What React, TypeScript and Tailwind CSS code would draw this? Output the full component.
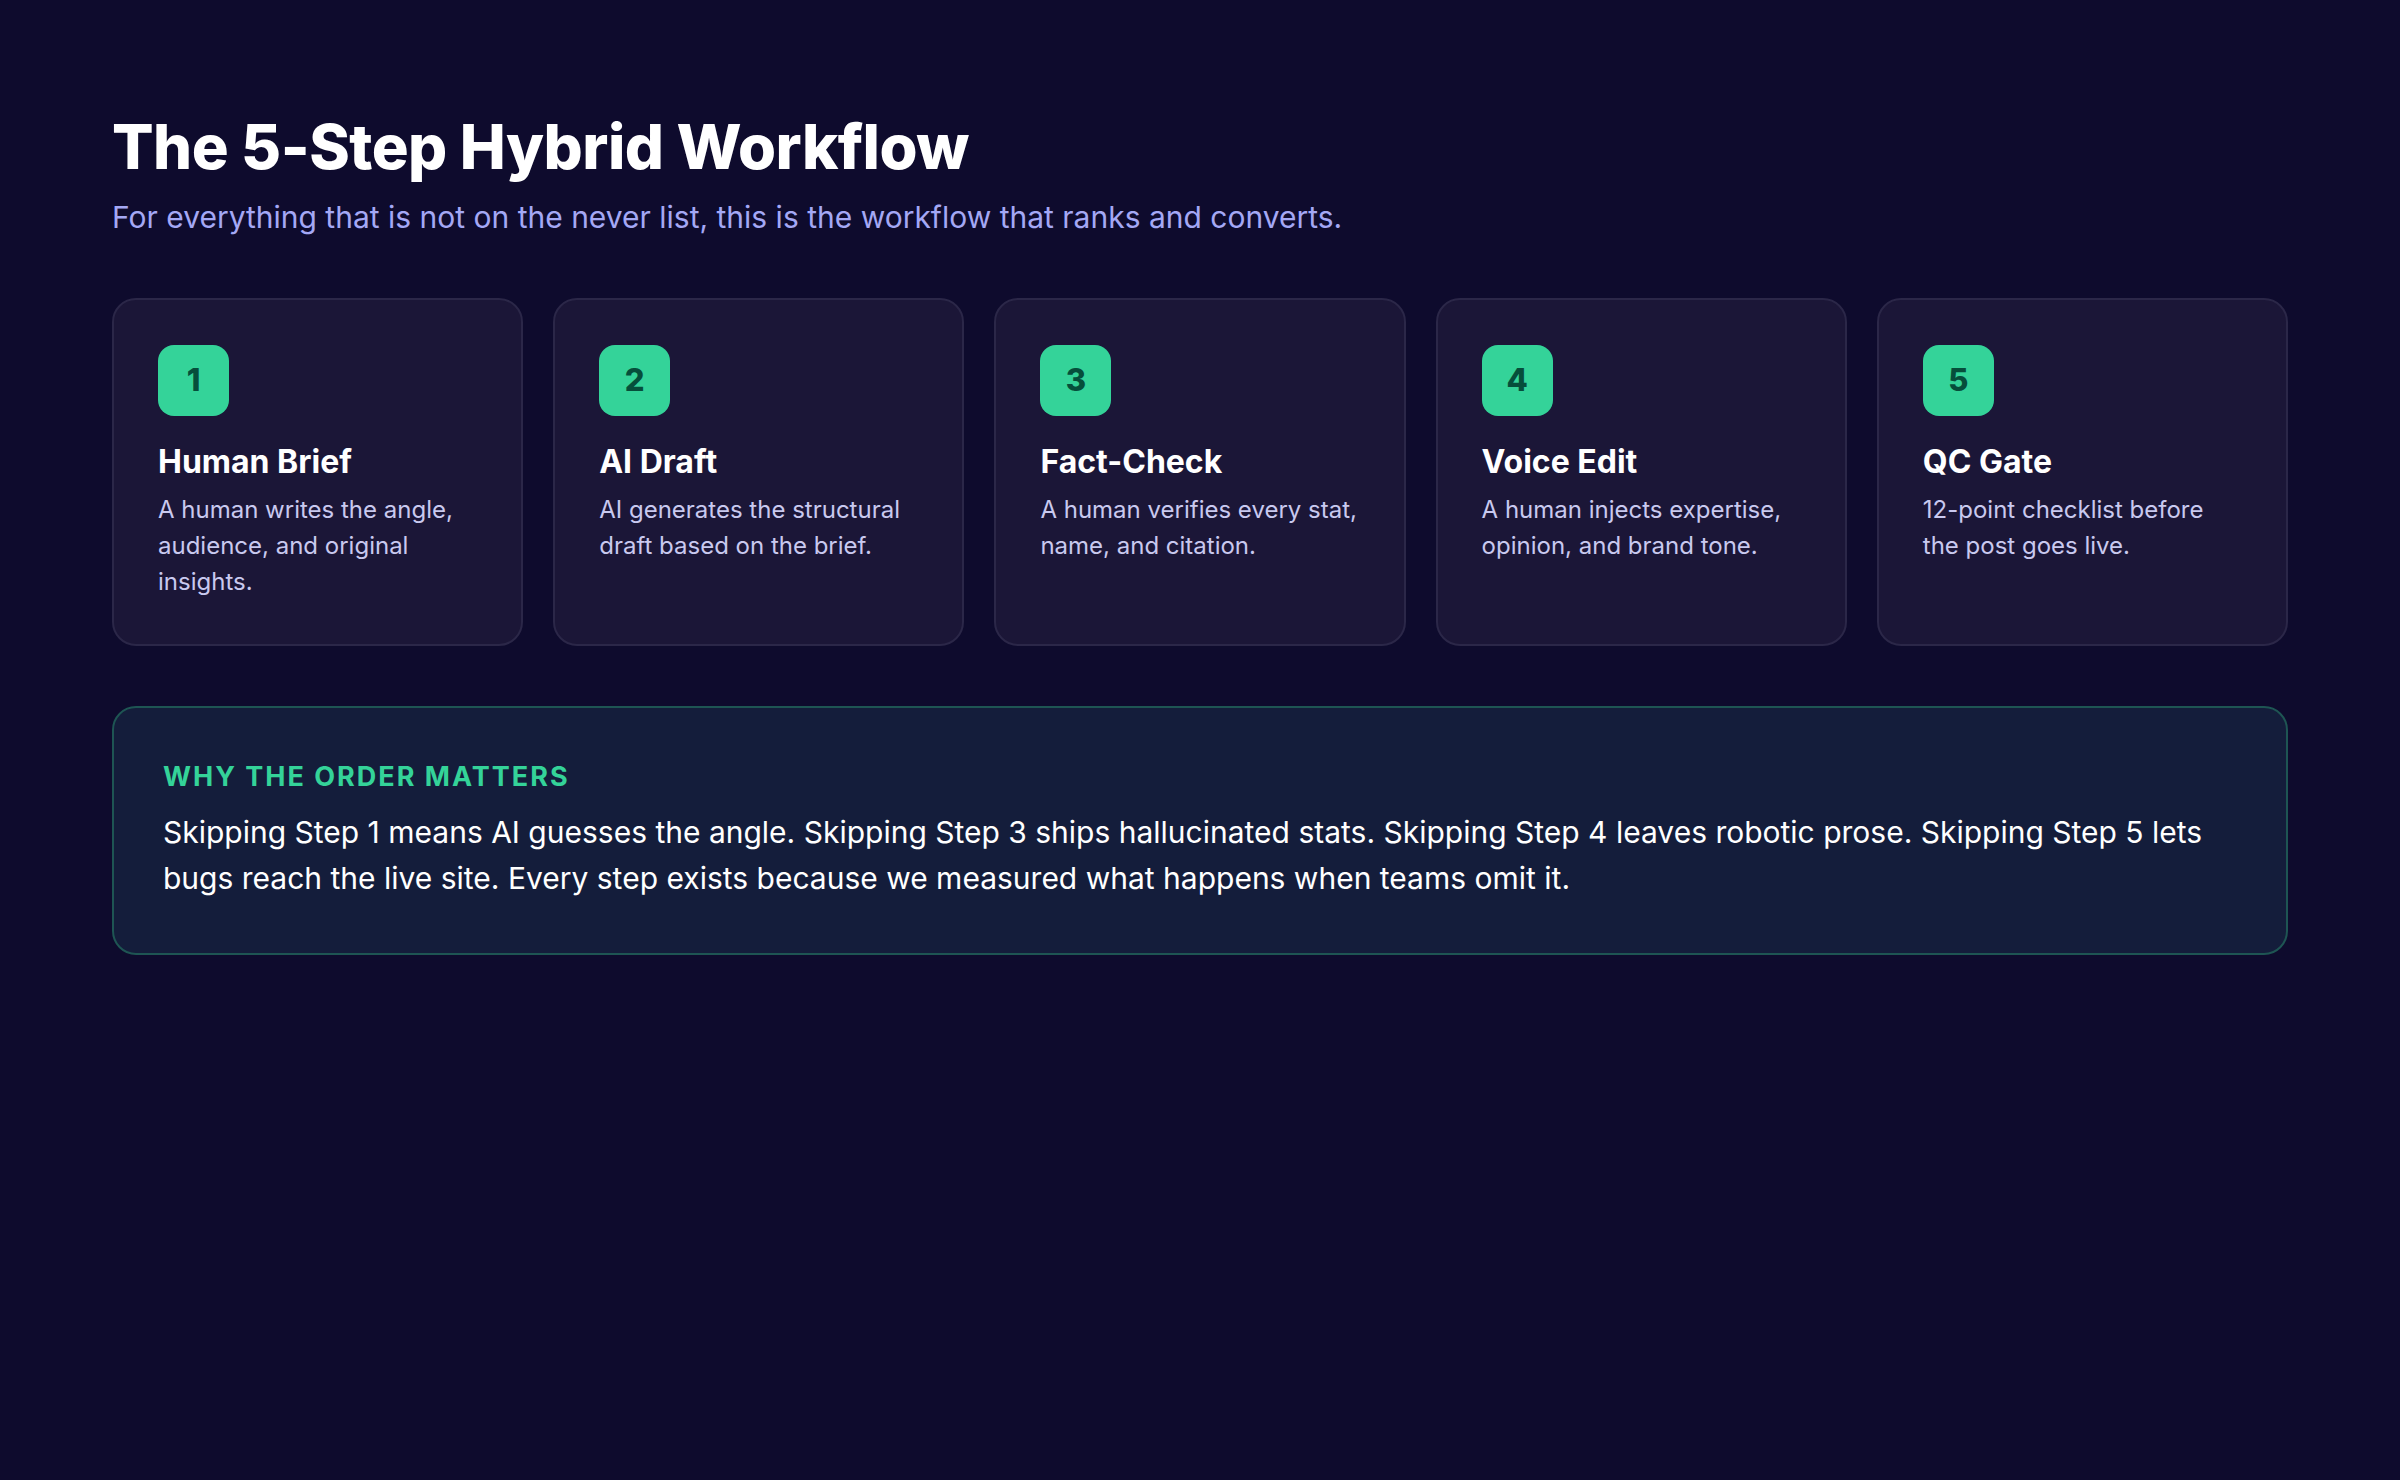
export default function App() {
  const steps = [
    ["1", "Human Brief", "A human writes the angle, audience, and original insights."],
    ["2", "AI Draft", "AI generates the structural draft based on the brief."],
    ["3", "Fact-Check", "A human verifies every stat, name, and citation."],
    ["4", "Voice Edit", "A human injects expertise, opinion, and brand tone."],
    ["5", "QC Gate", "12-point checklist before the post goes live."],
  ];
  return (
    <div className="min-h-[1480px] w-full bg-[#0e0b2d] px-[112px] pt-[110px]" style={{ fontFamily: "Inter, 'Noto Sans', sans-serif" }}>
      <h1 className="text-[61.5px] font-extrabold leading-[74px] tracking-[-0.5px] text-white">The 5-Step Hybrid Workflow</h1>
      <p className="mt-[12px] text-[30px] leading-[42px] text-[#a4a8f5]">For everything that is not on the never list, this is the workflow that ranks and converts.</p>
      <div className="mt-[60px] grid grid-cols-5 gap-[30px]">
        {steps.map(([n, t, d]) => (
          <div key={n} className="h-[348px] rounded-[24px] border-2 border-[#2b2748] bg-[#1b1637] px-[44px] pt-[45px]">
            <div className="flex h-[71px] w-[71px] items-center justify-center rounded-[16px] bg-[#34d399] text-[31px] font-extrabold text-[#064e3b]">{n}</div>
            <div className="mt-[26px] text-[32px] font-bold leading-[40px] text-white">{t}</div>
            <div className="mt-[10px] text-[24px] leading-[36px] text-[#c9c9ef]">{d}</div>
          </div>
        ))}
      </div>
      <div className="mt-[60px] rounded-[24px] border-2 border-[#1e5553] bg-[#141d3b] px-[49px] pt-[51px] pb-[52px]">
        <div className="text-[27px] font-bold uppercase leading-[36px] tracking-[2px] text-[#34d399]">Why the order matters</div>
        <p className="mt-[14px] text-[30px] leading-[46px] text-white">Skipping Step 1 means AI guesses the angle. Skipping Step 3 ships hallucinated stats. Skipping Step 4 leaves robotic prose. Skipping Step 5 lets bugs reach the live site. Every step exists because we measured what happens when teams omit it.</p>
      </div>
    </div>
  );
}
